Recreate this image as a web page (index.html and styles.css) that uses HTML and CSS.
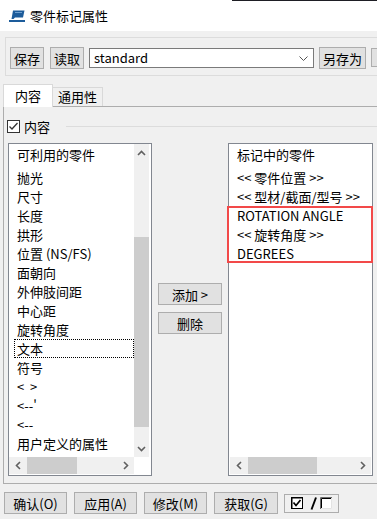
FILE: index.html
```html
<!DOCTYPE html>
<html lang="zh-CN">
<head>
  <meta charset="UTF-8">
  <title>零件标记属性</title>
  <link rel="stylesheet" href="styles.css">
</head>
<body>
  <div class="dialog">
    <div class="titlebar">
      <svg class="app-icon" width="17" height="13" viewBox="0 0 17 13">
        <path d="M4 0.5 H15.5 L14 7.5 H6 L4.5 9 H2.5 Z" fill="#1d5c9b"/>
        <path d="M6 2.5 H13" stroke="#6fa0d0" stroke-width="1"/>
        <rect x="0" y="10" width="16" height="2" fill="#1d5c9b"/>
      </svg>
      <span class="title">零件标记属性</span>
    </div>

    <div class="toolbar">
      <button class="btn btn-save">保存</button>
      <button class="btn btn-load">读取</button>
      <div class="combo">
        <span>standard</span>
        <svg class="combo-arrow" width="9" height="5" viewBox="0 0 9 5"><path d="M0.5 0.5 L4.5 4.5 L8.5 0.5" fill="none" stroke="#555" stroke-width="1"/></svg>
      </div>
      <button class="btn btn-saveas">另存为</button>
      <button class="btn btn-icon">
        <svg width="10" height="10" viewBox="0 0 10 10"><rect x="3" y="2" width="2" height="4" fill="#e8a030"/><rect x="3" y="7" width="2" height="2" fill="#e8a030"/></svg>
      </button>
    </div>

    <div class="tabs">
      <div class="tab active">内容</div>
      <div class="tab">通用性</div>
    </div>

    <div class="tab-panel">
      <div class="legend">
        <svg class="checkbox" width="13" height="13" viewBox="0 0 13 13">
          <rect x="0.5" y="0.5" width="12" height="12" fill="#fff" stroke="#333"/>
          <path d="M2.5 6.5 L5 9 L10.5 3" fill="none" stroke="#333" stroke-width="1.3"/>
        </svg>
        <span class="legend-text">内容</span>
        <span class="legend-line"></span>
      </div>

      <div class="lists">
        <div class="listbox list-left">
          <div class="list-items">
            <div class="list-head">可利用的零件</div>
            <div class="item">抛光</div>
            <div class="item">尺寸</div>
            <div class="item">长度</div>
            <div class="item">拱形</div>
            <div class="item">位置 (NS/FS)</div>
            <div class="item">面朝向</div>
            <div class="item">外伸肢间距</div>
            <div class="item">中心距</div>
            <div class="item">旋转角度</div>
            <div class="item focused">文本</div>
            <div class="item">符号</div>
            <div class="item">&lt;&nbsp; &gt;</div>
            <div class="item">&lt;--'</div>
            <div class="item">&lt;--</div>
            <div class="item">用户定义的属性</div>
            <div class="item">柱属性</div>
          </div>
          <div class="vscroll">
            <div class="arrow-box">
              <svg width="9" height="6" viewBox="0 0 9 6"><path d="M1 5 L4.5 1.5 L8 5" fill="none" stroke="#606060" stroke-width="1.6"/></svg>
            </div>
            <div class="vtrack"><div class="vthumb"></div></div>
            <div class="arrow-box">
              <svg width="9" height="6" viewBox="0 0 9 6"><path d="M1 1 L4.5 4.5 L8 1" fill="none" stroke="#606060" stroke-width="1.6"/></svg>
            </div>
          </div>
          <div class="hscroll">
            <div class="arrow-box">
              <svg width="6" height="9" viewBox="0 0 6 9"><path d="M5 1 L1.5 4.5 L5 8" fill="none" stroke="#606060" stroke-width="1.6"/></svg>
            </div>
            <div class="htrack"><div class="hthumb thumb-left"></div></div>
            <div class="arrow-box">
              <svg width="6" height="9" viewBox="0 0 6 9"><path d="M1 1 L4.5 4.5 L1 8" fill="none" stroke="#606060" stroke-width="1.6"/></svg>
            </div>
          </div>
          <div class="corner"></div>
        </div>

        <div class="mid-buttons">
          <button class="btn btn-mid">添加 &gt;</button>
          <button class="btn btn-mid">删除</button>
        </div>

        <div class="listbox list-right">
          <div class="list-items">
            <div class="list-head">标记中的零件</div>
            <div class="item">&lt;&lt; 零件位置 &gt;&gt;</div>
            <div class="item">&lt;&lt; 型材/截面/型号 &gt;&gt;</div>
            <div class="marked">
              <div class="item">ROTATION ANGLE</div>
              <div class="item">&lt;&lt; 旋转角度 &gt;&gt;</div>
              <div class="item">DEGREES</div>
            </div>
          </div>
          <div class="hscroll">
            <div class="arrow-box">
              <svg width="6" height="9" viewBox="0 0 6 9"><path d="M5 1 L1.5 4.5 L5 8" fill="none" stroke="#606060" stroke-width="1.6"/></svg>
            </div>
            <div class="htrack"><div class="hthumb thumb-right"></div></div>
            <div class="arrow-box">
              <svg width="6" height="9" viewBox="0 0 6 9"><path d="M1 1 L4.5 4.5 L1 8" fill="none" stroke="#606060" stroke-width="1.6"/></svg>
            </div>
          </div>
        </div>
      </div>
    </div>

    <div class="footer">
      <button class="btn btn-foot">确认(O)</button>
      <button class="btn btn-foot">应用(A)</button>
      <button class="btn btn-foot">修改(M)</button>
      <button class="btn btn-foot btn-get">获取(G)</button>
      <div class="toggle-box">
        <svg width="53" height="17" viewBox="0 0 53 17">
          <rect x="6.5" y="2.5" width="11" height="11" fill="#fff" stroke="#000"/>
          <path d="M7 13 V3 H17" fill="none" stroke="#000" stroke-width="1"/>
          <path d="M8.5 7.5 L11 10.5 L15.5 5" fill="none" stroke="#000" stroke-width="1.7"/>
          <path d="M26.5 14.5 L31 2.5" stroke="#000" stroke-width="2"/>
          <rect x="35" y="2" width="12" height="12" fill="#fff"/>
          <path d="M35.5 14 V2.5 H47" fill="none" stroke="#6a6a6a" stroke-width="1"/>
          <path d="M36.5 13 V3.5 H46" fill="none" stroke="#000" stroke-width="1"/>
          <path d="M46.5 3 V13.5 H36" fill="none" stroke="#e3e3e3" stroke-width="1"/>
        </svg>
      </div>
    </div>
  </div>
</body>
</html>
```

FILE: styles.css
```css
* {
  box-sizing: border-box;
}
body {
  margin: 0;
  background-color: #f0f0f0;
  color: #000;
  font-family: "Noto Sans CJK SC", "Noto Sans", sans-serif;
  font-size: 13px;
  overflow: hidden;
}
.dialog {
  width: 377px;
  height: 519px;
  overflow: hidden;
}

/* title bar */
.titlebar {
  height: 31px;
  display: flex;
  align-items: center;
  gap: 4px;
  padding-left: 9px;
  background: linear-gradient(to right, #fff 232px, #1e1e24 232px) top / 100% 1px no-repeat, #fff;
}
.app-icon {
  margin-top: 1px;
}
.title {
  font-size: 13px;
  line-height: 16px;
  margin-top: 1px;
}

/* buttons */
.btn {
  height: 22px;
  padding: 0;
  background-color: #e1e1e1;
  border: 1px solid #adadad;
  font: inherit;
  color: #000;
  line-height: 19px;
  flex-shrink: 0;
}

/* toolbar group */
.toolbar {
  margin: 6px 0 0 5px;
  height: 39px;
  border: 1px solid #dcdcdc;
  border-right: none;
  padding: 9px 0 0 4px;
  display: flex;
  align-items: flex-start;
  white-space: nowrap;
}
.btn-save {
  width: 34px;
}
.btn-load {
  width: 34px;
  margin-left: 6px;
}
.combo {
  width: 225px;
  height: 20px;
  margin: 1px 0 0 5px;
  flex-shrink: 0;
  background-color: #fff;
  border: 1px solid #7a7a7a;
  display: flex;
  align-items: center;
  justify-content: space-between;
  padding: 0 4px 0 4px;
  line-height: 18px;
}
.combo-arrow {
  margin-right: 1px;
}
.btn-saveas {
  width: 47px;
  margin-left: 5px;
}
.btn-icon {
  width: 22px;
  height: 19px;
  margin: 1px 0 0 5px;
  display: flex;
  align-items: center;
  padding-left: 2px;
}

/* tabs */
.tabs {
  margin: 8px 0 0 3px;
  height: 22px;
  display: flex;
  align-items: flex-end;
}
.tab {
  width: 50px;
  height: 19px;
  border: 1px solid #d9d9d9;
  border-bottom: none;
  border-left: none;
  text-align: center;
  line-height: 17px;
}
.tab.active {
  height: 23px;
  margin-bottom: -1px;
  border-left: 1px solid #d9d9d9;
  background-color: #fff;
  line-height: 21px;
  position: relative;
  z-index: 1;
}
.tab-panel {
  margin-left: 3px;
  border: 1px solid #adadad;
  border-right: none;
  padding-bottom: 7px;
}

/* group legend */
.legend {
  margin: 13px 0 0 3px;
  height: 13px;
  display: flex;
  align-items: center;
}
.legend-text {
  margin-left: 4px;
  line-height: 14px;
}
.legend-line {
  flex: 1;
  margin-left: 16px;
  border-top: 1px solid #dcdcdc;
}

/* lists */
.lists {
  margin: 10px 0 0 4px;
  display: flex;
  gap: 6px;
}
.listbox {
  height: 333px;
  background-color: #fff;
  border: 1px solid #828790;
  display: grid;
  overflow: hidden;
}
.list-left {
  width: 144px;
  padding: 0 2px 1px 0;
  grid-template-columns: 1fr 15px;
  grid-template-rows: 1fr 17px;
}
.list-right {
  width: 145px;
  padding: 0 1px 1px 1px;
  grid-template-columns: 1fr;
  grid-template-rows: 1fr 17px;
  overflow: visible;
}
.list-items {
  overflow: hidden;
  padding-top: 1px;
}
.list-right .list-items {
  overflow: visible;
}
.list-head {
  height: 20px;
  line-height: 20px;
  padding-left: 8px;
  margin-bottom: 3px;
  white-space: nowrap;
}
.item {
  height: 19px;
  line-height: 19px;
  white-space: nowrap;
  padding-left: 8px;
}
.list-left .item {
  margin-left: 5px;
  padding-left: 3px;
}
.list-right .list-head,
.list-right .item {
  padding-left: 7px;
}
.item.focused {
  outline: 1px dotted #000;
  outline-offset: -1px;
}
.marked {
  position: relative;
}
.marked::after {
  content: "";
  position: absolute;
  top: 0;
  bottom: 0;
  left: -3px;
  right: -2px;
  border: 2px solid #f24949;
}

/* scrollbars */
.vscroll {
  background-color: #f0f0f0;
  display: flex;
  flex-direction: column;
}
.arrow-box {
  flex: 0 0 17px;
  display: flex;
  align-items: center;
  justify-content: center;
}
.vtrack {
  flex: 1;
}
.vthumb {
  margin-top: 76px;
  height: 190px;
  background-color: #cdcdcd;
}
.hscroll {
  background-color: #f0f0f0;
  display: flex;
}
.htrack {
  flex: 1;
}
.hthumb {
  height: 17px;
  background-color: #cdcdcd;
}
.thumb-left {
  margin-left: 1px;
  width: 50px;
}
.thumb-right {
  margin-left: 1px;
  width: 69px;
}
.corner {
  background-color: #fff;
}

/* middle buttons */
.mid-buttons {
  width: 64px;
  padding-top: 140px;
  display: flex;
  flex-direction: column;
  gap: 7px;
}
.btn-mid {
  width: 64px;
}

/* footer */
.footer {
  margin-top: 8px;
  padding-left: 4px;
  display: flex;
  align-items: flex-start;
  gap: 7px;
}
.btn-foot {
  width: 63px;
}
.btn-get {
  width: 64px;
}
.toggle-box {
  width: 55px;
  height: 19px;
  margin: 2px 0 0 -1px;
  border: 1px solid #adadad;
  flex-shrink: 0;
}
.toggle-box svg {
  display: block;
}
```
